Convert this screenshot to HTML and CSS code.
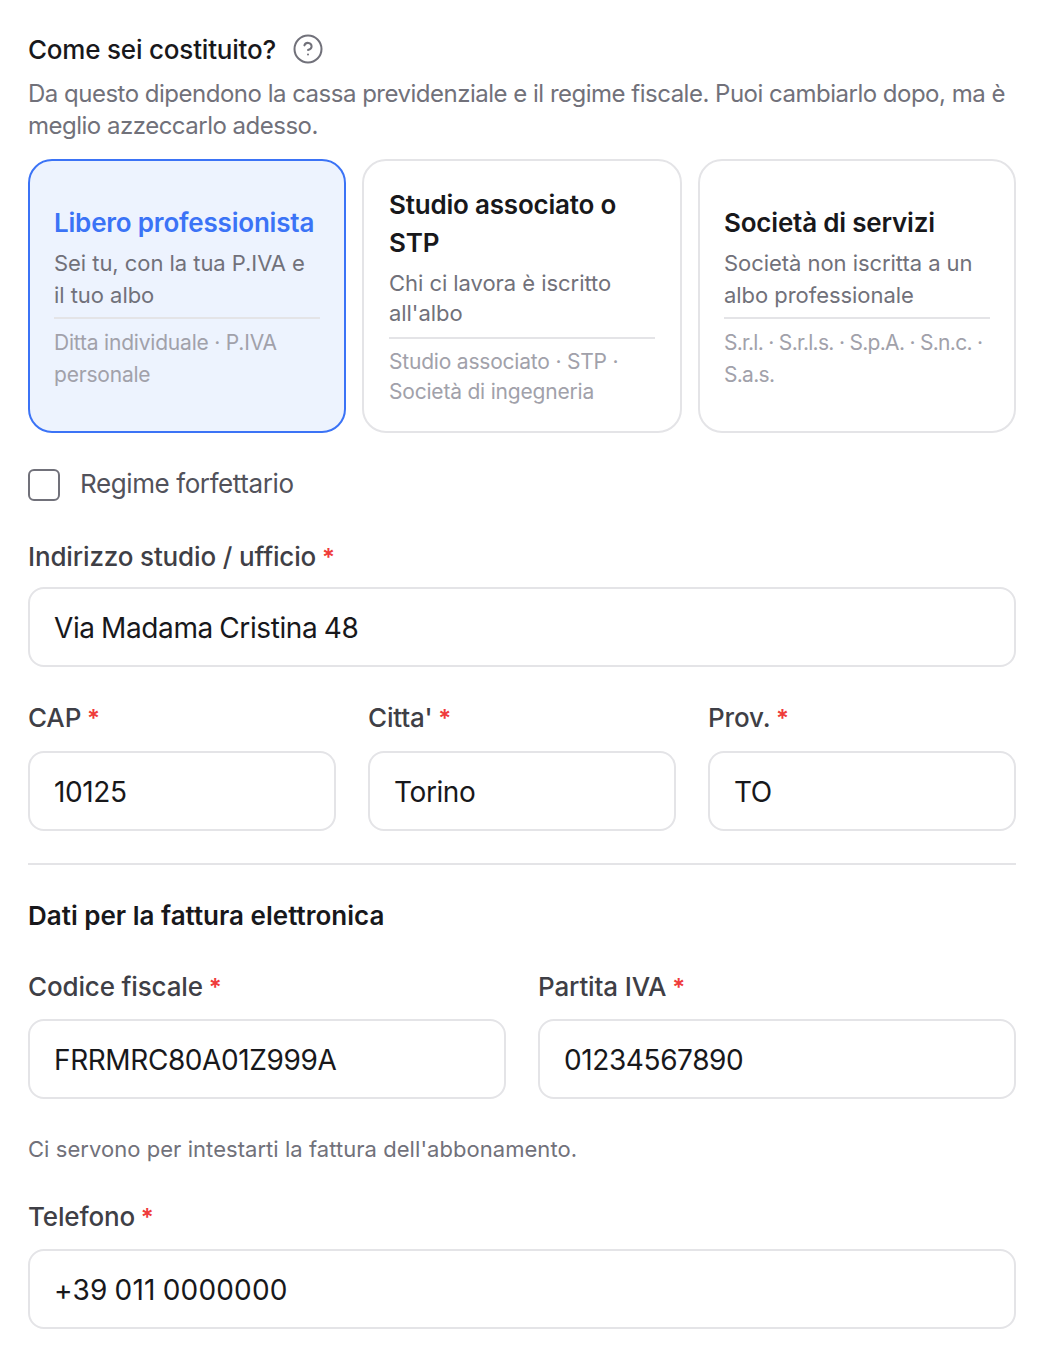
FILE: index.html
```html
<!DOCTYPE html>
<html lang="it">
<head>
    <meta charset="UTF-8">
    <title>Dati studio</title>
    <link rel="stylesheet" href="styles.css">
</head>
<body>
    <form class="form">
        <div class="title-row">
            <h3>Come sei costituito?</h3>
            <svg class="help-ico" width="30" height="30" viewBox="0 0 30 30" fill="none" stroke="#71717a" stroke-width="2" stroke-linecap="round" stroke-linejoin="round">
                <circle cx="15" cy="15" r="13.5"/>
                <path d="M11.4 11.4a3.7 3.7 0 0 1 7.2 1.2c0 2.4-3.6 3.4-3.6 3.4"/>
                <path d="M15 20.6h.01"/>
            </svg>
        </div>
        <p class="intro">Da questo dipendono la cassa previdenziale e il regime fiscale. Puoi cambiarlo dopo, ma è meglio azzeccarlo adesso.</p>

        <div class="cards">
            <div class="card selected">
                <div class="card-title">Libero professionista</div>
                <div class="card-desc">Sei tu, con la tua P.IVA e il tuo albo</div>
                <div class="card-note">Ditta individuale · P.IVA personale</div>
            </div>
            <div class="card compact">
                <div class="card-title">Studio associato o STP</div>
                <div class="card-desc">Chi ci lavora è iscritto all'albo</div>
                <div class="card-note">Studio associato · STP · Società di ingegneria</div>
            </div>
            <div class="card">
                <div class="card-title">Società di servizi</div>
                <div class="card-desc">Società non iscritta a un albo professionale</div>
                <div class="card-note tight">S.r.l. · S.r.l.s. · S.p.A. · S.n.c. · S.a.s.</div>
            </div>
        </div>

        <label class="check-row">
            <span class="check-box"></span>
            <span class="check-text">Regime forfettario</span>
        </label>

        <div class="field address">
            <label>Indirizzo studio / ufficio <span class="req">*</span></label>
            <div class="input">Via Madama Cristina 48</div>
        </div>

        <div class="row-3">
            <div class="field">
                <label>CAP <span class="req">*</span></label>
                <div class="input">10125</div>
            </div>
            <div class="field">
                <label>Citta' <span class="req">*</span></label>
                <div class="input">Torino</div>
            </div>
            <div class="field">
                <label>Prov. <span class="req">*</span></label>
                <div class="input">TO</div>
            </div>
        </div>

        <hr class="divider">

        <div class="section-title">Dati per la fattura elettronica</div>

        <div class="row-2">
            <div class="field">
                <label>Codice fiscale <span class="req">*</span></label>
                <div class="input">FRRMRC80A01Z999A</div>
            </div>
            <div class="field">
                <label>Partita IVA <span class="req">*</span></label>
                <div class="input">01234567890</div>
            </div>
        </div>

        <p class="hint">Ci servono per intestarti la fattura dell'abbonamento.</p>

        <div class="field">
            <label>Telefono <span class="req">*</span></label>
            <div class="input phone">+39 011 0000000</div>
        </div>
    </form>
</body>
</html>
```

FILE: styles.css
```css
body {
    font-family: Inter, 'Liberation Sans', sans-serif;
    margin: 0;
    background: #fff;
}
.form {
    padding: 32px 28px 27px 28px;
}
.title-row {
    display: flex;
    align-items: center;
    gap: 17px;
    height: 34px;
}
h3 {
    margin: 0;
    font-size: 26px;
    font-weight: 500;
    letter-spacing: -0.2px;
    color: #18181b;
}
.intro {
    margin: 12px 0 17px 0;
    font-size: 24px;
    line-height: 32px;
    letter-spacing: -0.5px;
    color: #71717a;
}
.cards {
    display: grid;
    grid-template-columns: 318px 320px 318px;
    gap: 16px;
    margin-bottom: 36px;
}
.card {
    display: flex;
    flex-direction: column;
    justify-content: center;
    height: 274px;
    box-sizing: border-box;
    padding: 3px 24px 0 24px;
    border: 2px solid #e4e4e7;
    border-radius: 24px;
}
.card.selected {
    background: #edf3fe;
    border-color: #3b73f6;
}
.card-title {
    font-size: 26px;
    line-height: 38px;
    font-weight: 600;
    letter-spacing: -0.2px;
    color: #18181b;
}
.card.selected .card-title {
    color: #3b73f6;
}
.card-desc {
    margin-top: 5px;
    padding-bottom: 6px;
    font-size: 22px;
    line-height: 32px;
    letter-spacing: -0.05px;
    color: #71717a;
    border-bottom: 2px solid #e4e4e7;
}
.card-note {
    padding-top: 8px;
    font-size: 21px;
    line-height: 32px;
    letter-spacing: -0.2px;
    color: #a1a1aa;
}
.card-note.tight {
    letter-spacing: -0.7px;
}
.card.compact {
    padding: 0 25px;
}
.card.compact .card-desc {
    margin-top: 6px;
    padding-bottom: 9px;
    line-height: 30px;
}
.card.compact .card-note {
    padding-top: 8px;
    line-height: 30px;
}
.check-row {
    display: flex;
    align-items: center;
    gap: 20px;
    margin-bottom: 40px;
    font-size: 26px;
    letter-spacing: -0.4px;
    color: #52525b;
}
.check-box {
    width: 32px;
    height: 32px;
    box-sizing: border-box;
    border: 2px solid #71717a;
    border-radius: 6px;
}
.check-text {
    padding-bottom: 2px;
    line-height: 28px;
}
.field label {
    display: block;
    margin-bottom: 16px;
    font-size: 26px;
    line-height: 32px;
    font-weight: 450;
    letter-spacing: -0.15px;
    color: #3f3f46;
}
.field.address label {
    margin-bottom: 14px;
}
.req {
    margin-left: -1px;
    font-size: 24px;
    line-height: 0;
    font-weight: 600;
    color: #ef3b3b;
}
.input {
    display: flex;
    align-items: center;
    height: 80px;
    box-sizing: border-box;
    padding: 2px 24px 0 24px;
    border: 2px solid #e4e4e7;
    border-radius: 16px;
    font-size: 28px;
    letter-spacing: -0.4px;
    word-spacing: -1px;
    color: #18181b;
}
.input.phone {
    letter-spacing: 0.2px;
}
.row-3 {
    display: grid;
    grid-template-columns: repeat(3, 1fr);
    gap: 32px;
    margin-top: 35px;
}
.row-3 .field label {
    margin-bottom: 17px;
}
.row-2 {
    display: grid;
    grid-template-columns: repeat(2, 1fr);
    gap: 32px;
}
.divider {
    margin: 32px 0 0 0;
    border: none;
    border-top: 2px solid #e4e4e7;
}
.section-title {
    margin: 35px 0 39px 0;
    font-size: 26px;
    line-height: 32px;
    font-weight: 600;
    color: #18181b;
}
.hint {
    margin: 34px 0 36px 0;
    font-size: 22px;
    line-height: 32px;
    letter-spacing: 0.05px;
    color: #71717a;
}
```
